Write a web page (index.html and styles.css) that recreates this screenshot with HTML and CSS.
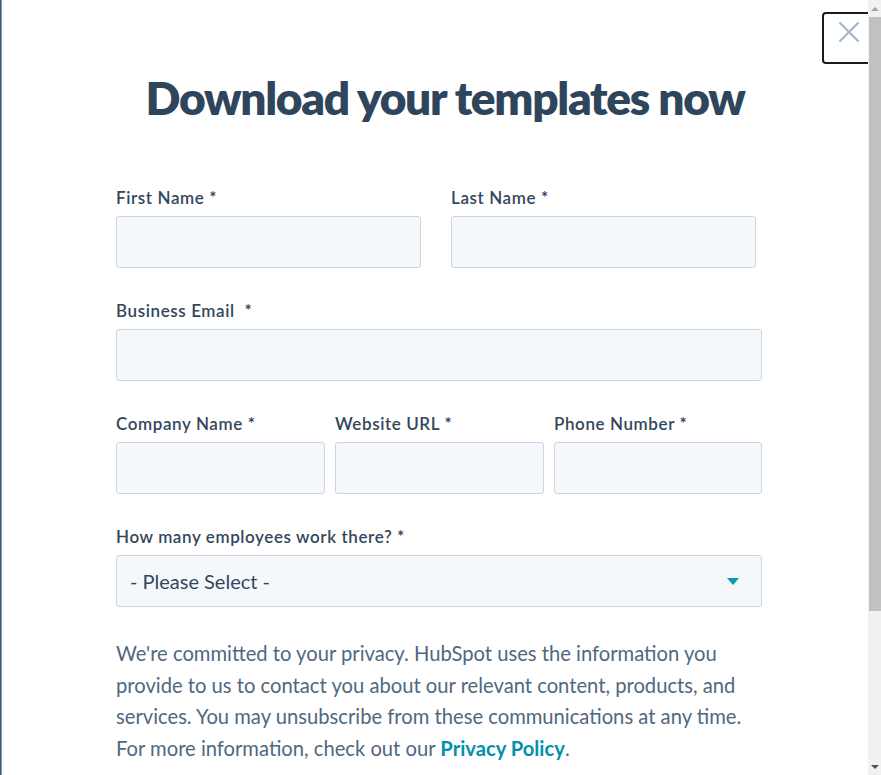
FILE: index.html
```html
<!DOCTYPE html>
<html lang="en">
<head>
<meta charset="utf-8">
<title>Download your templates now</title>
<link rel="stylesheet" href="styles.css">
</head>
<body>
<div class="frame">
  <main class="modal">
    <button class="close" type="button" aria-label="Close">
      <svg width="22" height="22" viewBox="0 0 22 22"><path d="M1.5 1.5 L20.5 20.5 M20.5 1.5 L1.5 20.5" stroke="#a2b7cb" stroke-width="2.2" fill="none"/></svg>
    </button>
    <h1 class="title">Download your templates now</h1>
    <form class="form">
      <div class="row two">
        <div class="field">
          <label class="label">First Name <span class="req">*</span></label>
          <div class="input"></div>
        </div>
        <div class="field">
          <label class="label">Last Name <span class="req">*</span></label>
          <div class="input"></div>
        </div>
      </div>
      <div class="row one">
        <div class="field">
          <label class="label">Business Email &nbsp;<span class="req">*</span></label>
          <div class="input"></div>
        </div>
      </div>
      <div class="row three">
        <div class="field">
          <label class="label">Company Name <span class="req">*</span></label>
          <div class="input"></div>
        </div>
        <div class="field">
          <label class="label">Website URL <span class="req">*</span></label>
          <div class="input"></div>
        </div>
        <div class="field">
          <label class="label">Phone Number <span class="req">*</span></label>
          <div class="input"></div>
        </div>
      </div>
      <div class="row one">
        <div class="field">
          <label class="label">How many employees work there? <span class="req">*</span></label>
          <div class="input select">
            <span class="placeholder">- Please Select -</span>
            <span class="caret"></span>
          </div>
        </div>
      </div>
      <p class="privacy">We're committed to your privacy. HubSpot uses the information you provide to us to contact you about our relevant content, products, and services. You may unsubscribe from these communications at any time. For more information, check out our <a class="link" href="#">Privacy Policy</a>.</p>
    </form>
  </main>
  <div class="scrollbar">
    <div class="arrow up"></div>
    <div class="track"><div class="thumb"></div></div>
    <div class="arrow down"></div>
  </div>
</div>
</body>
</html>
```
FILE: styles.css
```css
html, body {
  margin: 0;
  padding: 0;
  height: 100%;
  overflow: hidden;
  background: #ffffff;
}
.frame {
  display: flex;
  height: 775px;
  width: 881px;
}
.modal {
  position: relative;
  flex: 1;
  overflow: hidden;
  border-left: 1px solid #45596e;
  box-shadow: inset 1px 0 0 #8d9cab;
  font-family: Lato, "Open Sans", sans-serif;
  color: #33475b;
  padding-left: 115px;
}
.close {
  position: absolute;
  left: 821px;
  top: 12px;
  width: 54px;
  height: 52px;
  border: 2px solid #1b1b1b;
  border-radius: 4px;
  background: #fff;
  padding: 0;
  display: flex;
  align-items: flex-start;
  justify-content: flex-start;
}
.close svg {
  margin: 7px 0 0 14px;
  display: block;
}
.title {
  margin: 71px 0 0 0;
  width: 658px;
  text-align: center;
  font-size: 46px;
  line-height: 54px;
  font-weight: 800;
  color: #2f455b;
  letter-spacing: -1.3px;
}
.form {
  width: 646px;
  margin-top: 63px;
}
.row {
  display: grid;
  margin-bottom: 33px;
}
.row.two {
  grid-template-columns: 305px 305px;
  column-gap: 30px;
}
.row.three {
  grid-template-columns: 209px 209px 208px;
  column-gap: 10px;
}
.row.one {
  grid-template-columns: 1fr;
}
.field {
  display: flex;
  flex-direction: column;
}
.label {
  font-size: 17px;
  line-height: 20px;
  font-weight: 600;
  letter-spacing: 0.6px;
  color: #33475b;
  margin-bottom: 8px;
  white-space: nowrap;
}
.req {
  color: #33475b;
}
.input {
  box-sizing: border-box;
  height: 52px;
  background: #f5f8fa;
  border: 1px solid #cbd6e2;
  border-radius: 3px;
}
.select {
  display: flex;
  align-items: center;
  justify-content: space-between;
  padding: 0 22px 0 13px;
}
.placeholder {
  font-size: 20px;
  color: #33475b;
}
.caret {
  width: 0;
  height: 0;
  border-left: 6px solid transparent;
  border-right: 6px solid transparent;
  border-top: 7px solid #0a97b8;
  margin-top: 1px;
}
.privacy {
  margin: -2px 0 0 0;
  font-size: 20.2px;
  line-height: 31.5px;
  color: #4f6880;
}
.link {
  color: #0091ae;
  font-weight: 700;
  text-decoration: none;
}
.scrollbar {
  width: 13px;
  flex: none;
  background: #f1f1f1;
  display: flex;
  flex-direction: column;
}
.arrow {
  height: 17px;
  flex: none;
  display: flex;
  align-items: center;
  justify-content: center;
}
.arrow::after {
  content: "";
  width: 0;
  height: 0;
  border-left: 4px solid transparent;
  border-right: 4px solid transparent;
}
.arrow.up::after {
  border-bottom: 4px solid #a3a3a3;
}
.arrow.down::after {
  border-top: 4px solid #505050;
}
.track {
  flex: 1;
  padding-left: 1px;
}
.thumb {
  height: 594px;
  background: #c1c1c1;
}
```
